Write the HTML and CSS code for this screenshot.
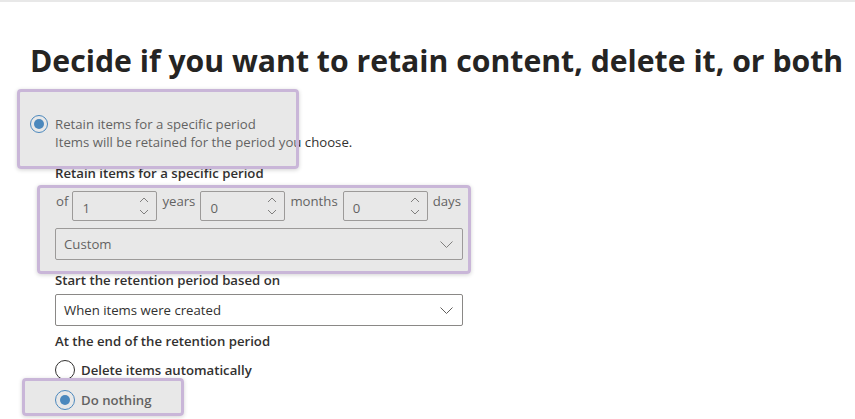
FILE: index.html
```html
<!DOCTYPE html>
<html>
<head>
<meta charset="utf-8">
<link rel="stylesheet" href="styles.css">
</head>
<body>
<div class="page">
  <h1 class="title">Decide if you want to retain content, delete it, or both</h1>
  <div class="form">
    <div class="radio-row main-radio">
      <span class="radio checked"></span>
      <div class="radio-text">
        <div class="radio-label">Retain items for a specific period</div>
        <div class="radio-desc">Items will be retained for the period you choose.</div>
      </div>
    </div>
    <div class="indent">
      <div class="field-label first">Retain items for a specific period</div>
      <div class="period-row">
        <span class="unit">of</span>
        <div class="spin"><span class="spin-val">1</span><span class="spin-btns"><svg width="10" height="6" viewBox="0 0 10 6"><path d="M1 5 L5 1 L9 5" fill="none" stroke="#605e5c" stroke-width="1"/></svg><svg width="10" height="6" viewBox="0 0 10 6"><path d="M1 1 L5 5 L9 1" fill="none" stroke="#605e5c" stroke-width="1"/></svg></span></div>
        <span class="unit">years</span>
        <div class="spin"><span class="spin-val">0</span><span class="spin-btns"><svg width="10" height="6" viewBox="0 0 10 6"><path d="M1 5 L5 1 L9 5" fill="none" stroke="#605e5c" stroke-width="1"/></svg><svg width="10" height="6" viewBox="0 0 10 6"><path d="M1 1 L5 5 L9 1" fill="none" stroke="#605e5c" stroke-width="1"/></svg></span></div>
        <span class="unit">months</span>
        <div class="spin"><span class="spin-val">0</span><span class="spin-btns"><svg width="10" height="6" viewBox="0 0 10 6"><path d="M1 5 L5 1 L9 5" fill="none" stroke="#605e5c" stroke-width="1"/></svg><svg width="10" height="6" viewBox="0 0 10 6"><path d="M1 1 L5 5 L9 1" fill="none" stroke="#605e5c" stroke-width="1"/></svg></span></div>
        <span class="unit">days</span>
      </div>
      <div class="dropdown first-dd"><span>Custom</span><svg width="13" height="7" viewBox="0 0 13 7"><path d="M0.5 0.5 L6.5 6.5 L12.5 0.5" fill="none" stroke="#605e5c" stroke-width="1"/></svg></div>
      <div class="field-label gap-top">Start the retention period based on</div>
      <div class="dropdown second-dd"><span>When items were created</span><svg width="13" height="7" viewBox="0 0 13 7"><path d="M0.5 0.5 L6.5 6.5 L12.5 0.5" fill="none" stroke="#605e5c" stroke-width="1"/></svg></div>
      <div class="field-label gap-top2">At the end of the retention period</div>
      <div class="radio-row option">
        <span class="radio"></span>
        <span class="option-label">Delete items automatically</span>
      </div>
      <div class="radio-row option">
        <span class="radio checked"></span>
        <span class="option-label">Do nothing</span>
      </div>
    </div>
  </div>
  <div class="highlight hl-1"></div>
  <div class="highlight hl-2"></div>
  <div class="highlight hl-3"></div>
</div>
</body>
</html>
```

FILE: styles.css
```css
html, body {
  margin: 0;
  padding: 0;
  background: #ffffff;
  overflow: hidden;
}
body {
  font-family: "Open Sans", "Noto Sans", sans-serif;
  color: #323130;
}
.page {
  position: relative;
  width: 855px;
  height: 419px;
  border-top: 2px solid #e8e8e8;
  box-sizing: border-box;
}
.title {
  margin: 0;
  padding: 37px 0 0 30px;
  font-size: 30.2px;
  line-height: 44px;
  font-weight: 700;
  letter-spacing: 0;
  color: #252423;
  white-space: nowrap;
}
.form {
  padding: 0 0 0 30px;
  margin-top: 32px;
  font-size: 13.2px;
}
.radio-row {
  display: flex;
  align-items: flex-start;
}
.radio {
  width: 18px;
  height: 18px;
  border: 1px solid #323130;
  border-radius: 50%;
  box-sizing: border-box;
  position: relative;
  flex: none;
}
.radio.checked {
  border-color: #0f6cbd;
}
.radio.checked::after {
  content: "";
  position: absolute;
  left: 3px;
  top: 3px;
  width: 10px;
  height: 10px;
  border-radius: 50%;
  background: #0f6cbd;
}
.radio-text {
  margin-left: 7px;
}
.radio-label {
  line-height: 18px;
}
.radio-desc {
  line-height: 19px;
  color: #323130;
}
.indent {
  padding-left: 25px;
}
.field-label {
  font-weight: 600;
  line-height: 20px;
}
.field-label.first {
  margin-top: 11px;
}
.period-row {
  display: flex;
  align-items: flex-start;
  margin-top: 8px;
  height: 30px;
}
.unit {
  line-height: 20px;
  padding: 0 5px 0 5px;
}
.period-row .unit:first-child {
  padding-left: 1px;
  padding-right: 4px;
}
.spin {
  width: 85px;
  height: 30px;
  border: 1px solid #8a8886;
  border-radius: 2px;
  box-sizing: border-box;
  display: flex;
  align-items: center;
  justify-content: space-between;
  padding: 0 7px 0 9px;
  background: #fff;
}
.spin-val {
  margin-top: 3px;
}
.spin-btns {
  display: flex;
  flex-direction: column;
  gap: 6px;
}
.spin-btns svg {
  display: block;
}
.dropdown {
  width: 408px;
  height: 32px;
  border: 1px solid #8a8886;
  border-radius: 2px;
  box-sizing: border-box;
  display: flex;
  align-items: center;
  justify-content: space-between;
  padding: 0 9px 0 8px;
  background: #fff;
}
.first-dd {
  margin-top: 7px;
}
.second-dd {
  margin-top: 4px;
}
.gap-top {
  margin-top: 10px;
}
.gap-top2 {
  margin-top: 5px;
}
.option {
  align-items: center;
  margin-top: 9px;
}
.option + .option {
  margin-top: 10px;
}
.option .radio {
  width: 20px;
  height: 20px;
}
.option .radio.checked::after {
  left: 4px;
  top: 4px;
}
.option-label {
  margin-left: 6px;
  font-weight: 600;
}
.highlight {
  position: absolute;
  border: 3px solid #c9b6d8;
  border-radius: 4px;
  background: rgba(189, 189, 189, 0.35);
  box-shadow: 0 1px 4px rgba(0, 0, 0, 0.18);
  box-sizing: border-box;
}
.hl-1 { left: 17px; top: 87px; width: 282px; height: 80px; }
.hl-2 { left: 37px; top: 183px; width: 434px; height: 89px; }
.hl-3 { left: 22px; top: 376px; width: 162px; height: 38px; }
```
